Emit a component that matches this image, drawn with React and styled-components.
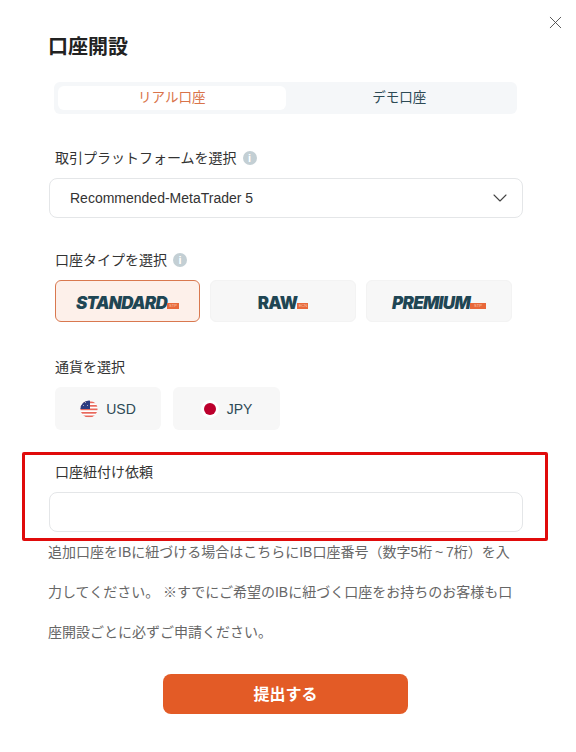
import styled, { createGlobalStyle } from 'styled-components';
import { X, ChevronDown } from 'lucide-react';

const Global = createGlobalStyle`
    html, body {
        margin: 0;
        padding: 0;
        background: #fff;
    }
    body {
        font-family: "Liberation Sans", "Noto Sans CJK JP", sans-serif;
    }
`;

const Modal = styled.div`
    position: relative;
    width: 576px;
    height: 752px;
    box-sizing: border-box;
    padding: 34px 53px 0 49px;
    overflow: hidden;
`;

const Close = styled.button`
    position: absolute;
    top: 12px;
    right: 10px;
    padding: 0;
    border: 0;
    background: none;
    display: flex;
    color: #444;
`;

const Title = styled.h1`
    margin: 0 0 0 -1px;
    font-size: 20px;
    line-height: 26px;
    font-weight: 700;
    color: #222;
`;

const Tabs = styled.div`
    display: flex;
    margin: 22px 6px 0 5px;
    height: 32px;
    box-sizing: border-box;
    padding: 4px;
    background: #f5f7f9;
    border-radius: 6px;
`;

const Tab = styled.div`
    flex: 1;
    display: flex;
    align-items: center;
    justify-content: center;
    box-sizing: border-box;
    padding-bottom: 5px;
    font-size: 13.5px;
    border-radius: 6px;
    background: ${p => (p.$active ? '#fff' : 'transparent')};
    color: ${p => (p.$active ? '#d9734a' : '#2d4a55')};
`;

const Label = styled.div`
    display: flex;
    align-items: center;
    gap: 6px;
    margin: ${p => p.$top}px 0 0 6px;
    height: 20px;
    box-sizing: border-box;
    padding-bottom: 2px;
    font-size: 14px;
    color: #333;
`;

const Info = styled.span`
    margin-top: 2px;
    width: 14px;
    height: 14px;
    border-radius: 50%;
    background: #c3cfd4;
    color: #fff;
    font-size: 11px;
    font-weight: 700;
    line-height: 14px;
    text-align: center;
`;

const Field = styled.div`
    display: flex;
    align-items: center;
    justify-content: space-between;
    margin-top: 10px;
    height: 40px;
    box-sizing: border-box;
    padding: 0 10px 0 20px;
    border: 1px solid #e4e6e8;
    border-radius: 8px;
    font-size: 14px;
    color: #333;
    background: #fff;
`;

const PlanRow = styled.div`
    display: flex;
    gap: 10px;
    margin: 10px 0 0 6px;
`;

const Plan = styled.div`
    width: ${p => p.$w}px;
    height: 42px;
    box-sizing: border-box;
    display: flex;
    align-items: center;
    justify-content: center;
    border-radius: 6px;
    border: 1px solid ${p => (p.$active ? '#d9784f' : '#f3f3f3')};
    background: ${p => (p.$active ? '#fdf0ea' : '#f7f7f7')};
`;

const PlanName = styled.span`
    margin-top: 3px;
    font-family: Inter, "Liberation Sans", sans-serif;
    font-size: 17px;
    font-weight: 900;
    font-style: ${p => (p.$upright ? 'normal' : 'italic')};
    letter-spacing: -0.7px;
    color: #1f4654;
    line-height: 20px;
`;

const PlanTag = styled.span`
    align-self: flex-end;
    margin-bottom: 12px;
    width: ${p => p.$w}px;
    height: 6px;
    background: #e8683a;
    color: #f9c9b5;
    font-size: 4px;
    line-height: 6px;
    text-align: center;
`;

const CurrencyRow = styled.div`
    display: flex;
    gap: 12px;
    margin: 10px 0 0 6px;
`;

const Currency = styled.div`
    width: ${p => p.$w}px;
    height: 43px;
    display: flex;
    align-items: center;
    justify-content: center;
    gap: 8px;
    border-radius: 6px;
    background: #f7f7f7;
    font-size: 14px;
    color: #2d4a55;
`;

const Help = styled.p`
    margin: 0 0 0 -1px;
    width: 470px;
    font-size: 14px;
    line-height: 40px;
    color: #666;
`;

const Submit = styled.button`
    display: block;
    margin: 22px 0 0 114px;
    width: 245px;
    height: 40px;
    padding: 0 0 3px;
    border: 0;
    border-radius: 8px;
    background: #e35b26;
    color: #fff;
    font-family: inherit;
    font-size: 16px;
    font-weight: 700;
`;

const Highlight = styled.div`
    position: absolute;
    left: 22px;
    top: 452px;
    width: 526px;
    height: 89px;
    box-sizing: border-box;
    border: 3px solid #e00b0b;
    border-radius: 2px;
    pointer-events: none;
`;

const UsFlag = () => (
    <svg width="18" height="18" viewBox="0 0 18 18">
        <defs>
            <clipPath id="usClip">
                <circle cx="9" cy="9" r="8.6" />
            </clipPath>
        </defs>
        <g clipPath="url(#usClip)">
            <rect width="18" height="18" fill="#fff" />
            {[1.5, 5, 8.5, 12, 15.5].map(y => (
                <rect key={y} x="0" y={y} width="18" height="1.7" fill="#e8685c" />
            ))}
            <rect width="10" height="9" fill="#2b3a80" />
            <rect x="2" y="2" width="1" height="1" fill="#aab" />
            <rect x="5" y="2" width="1" height="1" fill="#aab" />
            <rect x="3" y="5" width="1" height="1" fill="#aab" />
            <rect x="7" y="5" width="1" height="1" fill="#aab" />
        </g>
    </svg>
);

const JpFlag = () => (
    <svg width="18" height="18" viewBox="0 0 18 18">
        <circle cx="9" cy="9" r="9" fill="#fff" />
        <circle cx="9" cy="9" r="6" fill="#bc002d" />
    </svg>
);

const App = () => {
    return (
        <Modal>
            <Global />
            <Close aria-label="閉じる">
                <X size={21} strokeWidth={1} />
            </Close>
            <Title>口座開設</Title>
            <Tabs>
                <Tab $active>リアル口座</Tab>
                <Tab>デモ口座</Tab>
            </Tabs>

            <Label $top={34}>
                取引プラットフォームを選択
                <Info>i</Info>
            </Label>
            <Field>
                Recommended-MetaTrader 5
                <ChevronDown size={24} strokeWidth={1.1} color="#444" />
            </Field>

            <Label $top={32}>
                口座タイプを選択
                <Info>i</Info>
            </Label>
            <PlanRow>
                <Plan $w={145} $active>
                    <PlanName>STANDARD</PlanName>
                    <PlanTag $w={12}>STP</PlanTag>
                </Plan>
                <Plan $w={146}>
                    <PlanName $upright>RAW</PlanName>
                    <PlanTag $w={11}>ECN</PlanTag>
                </Plan>
                <Plan $w={146}>
                    <PlanName>PREMIUM</PlanName>
                    <PlanTag $w={16}>STP</PlanTag>
                </Plan>
            </PlanRow>

            <Label $top={35}>通貨を選択</Label>
            <CurrencyRow>
                <Currency $w={106}>
                    <UsFlag />
                    USD
                </Currency>
                <Currency $w={107}>
                    <JpFlag />
                    JPY
                </Currency>
            </CurrencyRow>

            <Label $top={32}>口座紐付け依頼</Label>
            <Field />

            <Help>
                追加口座をIBに紐づける場合はこちらにIB口座番号（数字5桁&thinsp;~&thinsp;7桁）を入力してください。 ※すでにご希望のIBに紐づく口座をお持ちのお客様も口座開設ごとに必ずご申請ください。
            </Help>
            <Submit>提出する</Submit>

            <Highlight />
        </Modal>
    );
};

export default App;
